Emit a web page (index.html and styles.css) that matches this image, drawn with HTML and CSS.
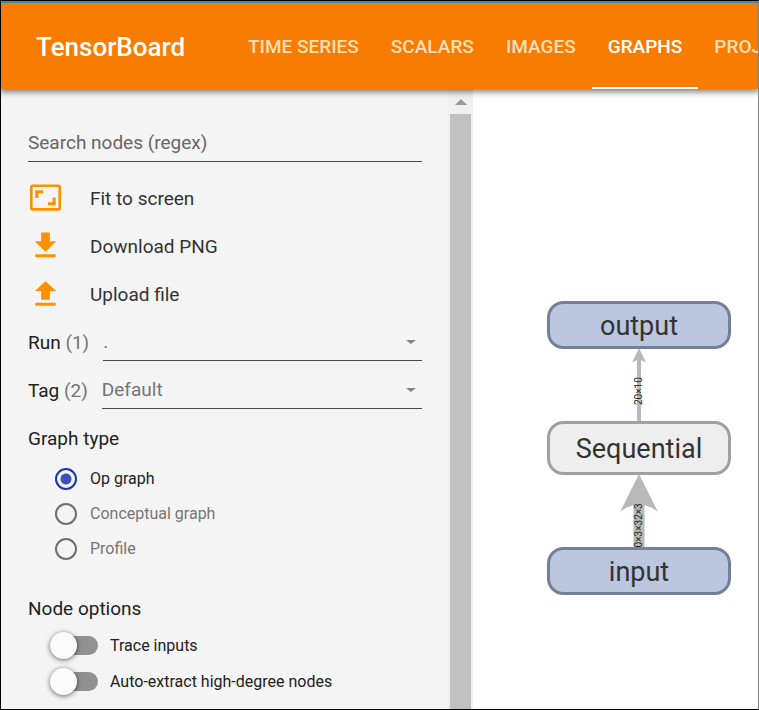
FILE: index.html
```html
<!DOCTYPE html>
<html lang="en">
<head>
<meta charset="utf-8">
<title>TensorBoard</title>
<link rel="stylesheet" href="styles.css">
</head>
<body>
<div class="app">
  <header class="toolbar">
    <h1 class="brand">TensorBoard</h1>
    <nav class="tabs">
      <a class="tab" href="#timeseries">TIME SERIES</a>
      <a class="tab" href="#scalars">SCALARS</a>
      <a class="tab" href="#images">IMAGES</a>
      <a class="tab tab-active" href="#graphs" aria-current="page">GRAPHS</a>
      <a class="tab" href="#projector">PROJECTOR</a>
    </nav>
  </header>
  <main class="content">
    <aside class="sidebar">
      <form class="controls">
        <input class="search" type="text" placeholder="Search nodes (regex)" aria-label="Search nodes (regex)">
        <button class="action" type="button">
          <svg class="icon" viewBox="0 0 36 36" aria-hidden="true"><path fill-rule="evenodd" d="M5 4h26a3 3 0 0 1 3 3v21a3 3 0 0 1-3 3H5a3 3 0 0 1-3-3V7a3 3 0 0 1 3-3zM4.700 6.800v21.500h26.600V6.800z"/><path d="M7.500 10h8v3.200h-4.800v4.800H7.500zM28.500 25.500h-8v-3.200h4.800v-4.800h3.200z"/></svg>
          <span>Fit to screen</span>
        </button>
        <button class="action" type="button">
          <svg class="icon" viewBox="0 0 36 36" aria-hidden="true"><path d="M13.500 4h9v9H29L18 24 7 13h6.500zM7.500 26.500h21v3h-21z"/></svg>
          <span>Download PNG</span>
        </button>
        <button class="action" type="button">
          <svg class="icon" viewBox="0 0 36 36" aria-hidden="true"><path d="M13.500 24h9v-9H29L18 5 7 15h6.500zM7.500 27h21v3h-21z"/></svg>
          <span>Upload file</span>
        </button>
        <div class="field">
          <label for="run">Run <span class="count">(1)</span></label>
          <span class="picker"><select id="run"><option>.</option></select></span>
        </div>
        <div class="field">
          <label for="tag">Tag <span class="count">(2)</span></label>
          <span class="picker"><select id="tag"><option>Default</option></select></span>
        </div>
        <fieldset class="group">
          <legend>Graph type</legend>
          <label class="radio"><input type="radio" name="type" checked><span>Op graph</span></label>
          <label class="radio"><input type="radio" name="type"><span>Conceptual graph</span></label>
          <label class="radio"><input type="radio" name="type"><span>Profile</span></label>
        </fieldset>
        <fieldset class="group group-options">
          <legend>Node options</legend>
          <label class="toggle"><input type="checkbox" role="switch"><span>Trace inputs</span></label>
          <label class="toggle"><input type="checkbox" role="switch"><span>Auto-extract high-degree nodes</span></label>
        </fieldset>
      </form>
      <div class="scrollbar" aria-hidden="true">
        <svg class="scroll-arrow" viewBox="0 0 12 6"><path d="M0 6 6 0l6 6z"/></svg>
        <div class="thumb"></div>
      </div>
    </aside>
    <section class="canvas" aria-label="Graph">
      <svg class="graph" viewBox="0 0 184 296">
        <path class="edge" d="M91 56h4v67h-4z"/>
        <path class="edge" d="M93 47 100 61.500 93 58 86 61.500z"/>
        <text class="edge-label" transform="translate(96 104) rotate(-90)">20×10</text>
        <path class="edge" d="M87.500 200h11v50h-11z"/>
        <path class="edge" d="M93 173 112 211Q93 196 74 211z"/>
        <text class="edge-label" transform="translate(96 252) rotate(-90)">20×3×32×3</text>
        <rect class="node" x="2.500" y="1.500" width="181" height="45" rx="15"/>
        <rect class="node module" x="2.500" y="121.500" width="181" height="51" rx="15"/>
        <rect class="node" x="2.500" y="247.500" width="181" height="45" rx="15"/>
        <text class="name" x="93" y="34">output</text>
        <text class="name" x="93" y="157">Sequential</text>
        <text class="name" x="93" y="280">input</text>
      </svg>
    </section>
  </main>
</div>
</body>
</html>
```
FILE: styles.css
```css
* { box-sizing: border-box; }

body {
  margin: 0;
  font-family: Roboto, "Liberation Sans", sans-serif;
  color: #212121;
}

.app {
  display: flex;
  flex-direction: column;
  height: 100vh;
  overflow: hidden;
  border: 1px solid #000;
  border-right-color: #808080;
  background: #fff;
}

.toolbar {
  position: relative;
  z-index: 1;
  display: flex;
  flex: none;
  height: 88px;
  border-top: 2px solid #3f8fa5;
  background: #f77c00;
  box-shadow: 0 2px 6px 1px rgba(0, 0, 0, 0.5);
  color: #fff;
}

.brand {
  flex: none;
  width: 231px;
  margin: 0;
  padding-left: 35px;
  font-size: 26px;
  font-weight: 500;
  line-height: 88px;
}

.tabs {
  display: flex;
  flex: 1;
  min-width: 0;
  overflow: hidden;
}

.tab {
  flex: none;
  height: 86px;
  padding: 0 16px;
  border-bottom: 2px solid transparent;
  color: #ffdfb9;
  font-size: 19px;
  font-weight: 500;
  line-height: 88px;
  text-decoration: none;
}

.tab-active {
  border-color: #fff;
  color: #fff;
}

.content {
  display: flex;
  flex: 1;
  min-height: 0;
}

.sidebar {
  display: flex;
  flex: none;
  width: 472px;
  background: #f4f4f4;
}

.controls {
  flex: 1;
  min-width: 0;
  padding: 35px 26px 0 27px;
  overflow: hidden;
  font-size: 19px;
}

.search {
  display: block;
  width: 100%;
  height: 38px;
  margin-bottom: 12px;
  padding: 0;
  border: 0;
  border-bottom: 1px solid #4a4a4a;
  background: none;
  font: inherit;
}

.search::placeholder {
  color: #666;
  opacity: 1;
}

.action {
  display: flex;
  align-items: center;
  gap: 27px;
  width: 100%;
  height: 48px;
  padding: 0;
  border: 0;
  background: none;
  color: #333;
  font: inherit;
}

.icon {
  width: 35px;
  height: 36px;
  fill: #ff9100;
}

.field {
  display: flex;
  align-items: center;
  gap: 14px;
  height: 48px;
}

.count { color: #757575; }

.picker {
  position: relative;
  flex: 1;
  height: 37px;
  border-bottom: 1px solid #4a4a4a;
}

.picker::after {
  content: "";
  position: absolute;
  right: 6px;
  top: 16px;
  border: 5px solid transparent;
  border-top: 4px solid #858585;
  border-bottom: 0;
  pointer-events: none;
}

.picker select {
  width: 100%;
  height: 36px;
  padding: 0;
  border: 0;
  appearance: none;
  background: none;
  color: #757575;
  font: inherit;
}

.group {
  margin: 0;
  padding: 13px 0 0;
  border: 0;
}

.group legend {
  float: left;
  width: 100%;
  margin-bottom: 10px;
  padding: 0;
  line-height: 24px;
}

.group-options { padding-top: 31px; }

.group-options legend { margin-bottom: 6px; }

.radio,
.toggle {
  display: flex;
  clear: both;
  align-items: center;
  font-size: 16px;
}

.radio {
  gap: 13px;
  height: 35px;
  padding-left: 27px;
  color: #757575;
}

.radio:has(:checked) { color: #212121; }

.radio input {
  width: 22px;
  height: 22px;
  margin: 0;
  border: 2px solid #6e6e6e;
  border-radius: 50%;
  appearance: none;
}

.radio input:checked {
  border-color: #1a35b0;
  background: radial-gradient(circle, #3f51b5 5px, transparent 6px);
}

.toggle {
  gap: 12px;
  height: 36px;
  padding-left: 32px;
}

.toggle input {
  display: flex;
  align-items: center;
  width: 38px;
  height: 19px;
  margin: 0;
  border-radius: 10px;
  appearance: none;
  background: #919191;
}

.toggle input::before {
  content: "";
  flex: none;
  width: 27px;
  height: 27px;
  margin-left: -10px;
  border-radius: 50%;
  background: #fafafa;
  box-shadow: 0 1px 5px rgba(0, 0, 0, 0.6);
}

.scrollbar {
  display: flex;
  flex: none;
  flex-direction: column;
  align-items: center;
  width: 25px;
  background: #f0f0f0;
}

.scroll-arrow {
  flex: none;
  width: 12px;
  height: 6px;
  margin: 10px 0 9px;
  fill: #999;
}

.thumb {
  flex: 1;
  width: 21px;
  background: #c1c1c1;
}

.canvas {
  flex: 1;
  min-width: 0;
  padding: 212px 0 0 73px;
}

.graph {
  display: block;
  width: 184px;
  height: 296px;
  overflow: visible;
}

.edge { fill: #b9b9b9; }

.edge-label {
  fill: #222;
  font-size: 10px;
}

.node {
  fill: #bbc6df;
  stroke: #738097;
  stroke-width: 3px;
}

.module {
  fill: #eee;
  stroke: #a0a0a0;
}

.name {
  fill: #333;
  font-size: 27px;
  text-anchor: middle;
}
```
